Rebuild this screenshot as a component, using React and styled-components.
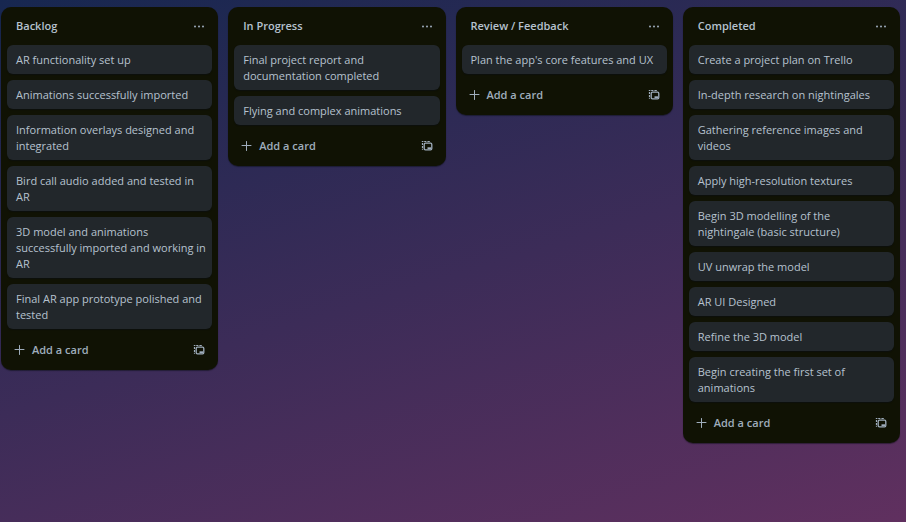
import styled, { createGlobalStyle } from "styled-components";

const lists = [
  {
    name: "Backlog",
    cards: [
      "AR functionality set up",
      "Animations successfully imported",
      "Information overlays designed and integrated",
      "Bird call audio added and tested in AR",
      "3D model and animations successfully imported and working in AR",
      "Final AR app prototype polished and tested",
    ],
  },
  {
    name: "In Progress",
    cards: [
      "Final project report and documentation completed",
      "Flying and complex animations",
    ],
  },
  {
    name: "Review / Feedback",
    cards: ["Plan the app's core features and UX"],
  },
  {
    name: "Completed",
    cards: [
      "Create a project plan on Trello",
      "In-depth research on nightingales",
      "Gathering reference images and videos",
      "Apply high-resolution textures",
      "Begin 3D modelling of the nightingale (basic structure)",
      "UV unwrap the model",
      "AR UI Designed",
      "Refine the 3D model",
      "Begin creating the first set of animations",
    ],
  },
];

const GlobalStyle = createGlobalStyle`
  * {
    box-sizing: border-box;
  }

  body {
    margin: 0;
    font-family: "Open Sans", "Noto Sans", sans-serif;
    font-size: 11px;
    line-height: 16px;
    color: #b6c2cf;
  }
`;

const Board = styled.main`
  display: grid;
  grid-template-columns: repeat(4, 1fr);
  align-items: start;
  gap: 10px;
  min-height: 100vh;
  padding: 7px 6px 7px 1px;
  background: linear-gradient(163deg, #172750 0%, #3c2c58 52%, #60305f 100%);
`;

const List = styled.section`
  padding: 0 6px;
  border-radius: 10px;
  background-color: #101204;
  box-shadow: 0 1px 1px rgba(9, 14, 20, 0.5);
`;

const Header = styled.header`
  display: flex;
  align-items: center;
  justify-content: space-between;
  height: 38px;
  padding: 0 5px 0 9px;
`;

const Name = styled.h2`
  margin: 0;
  font-size: 11px;
  font-weight: 600;
`;

const IconButton = styled.button`
  display: flex;
  padding: 2px;
  border: 0;
  background: none;
  color: #9fadbc;
  cursor: pointer;
`;

const Cards = styled.ul`
  display: flex;
  flex-direction: column;
  gap: 6px;
  margin: 0;
  padding: 0;
  list-style: none;
`;

const Card = styled.li`
  padding: 7px 6px 6px 9px;
  border-radius: 6px;
  background-color: #22272b;
  box-shadow: 0 1px 1px rgba(9, 14, 20, 0.5);
`;

const Footer = styled.footer`
  display: flex;
  align-items: center;
  justify-content: space-between;
  height: 41px;
  padding: 1px 5px 0;
`;

const AddButton = styled.button`
  display: flex;
  align-items: center;
  gap: 6px;
  padding: 0;
  border: 0;
  background: none;
  color: #9fadbc;
  font: inherit;
  font-weight: 600;
  cursor: pointer;
`;

function MoreIcon() {
  return (
    <svg width="12" height="12" viewBox="0 0 12 12" fill="currentColor">
      <circle cx="2" cy="6.5" r="1" />
      <circle cx="6" cy="6.5" r="1" />
      <circle cx="10" cy="6.5" r="1" />
    </svg>
  );
}

function PlusIcon() {
  return (
    <svg width="14" height="14" viewBox="0 0 14 14" fill="none" stroke="currentColor">
      <path d="M7.5 2.5v9M3 6.5h9" strokeLinecap="round" />
    </svg>
  );
}

function TemplateIcon() {
  return (
    <svg width="12" height="12" viewBox="0 0 12 12" fill="none" stroke="currentColor">
      <rect x="3.2" y="3.2" width="7.6" height="6.6" rx="1.2" strokeWidth="1.3" />
      <path d="M6.5 8.2h3.5" strokeWidth="1.8" />
      <path d="M.8 1.5h1.6M3.2 1.5h2.2M6.4 1.5h2.4M1.5 3v2M1.5 6v2M1.5 8.7v1" strokeWidth="1.2" />
    </svg>
  );
}

function BoardList({ name, cards }) {
  return (
    <List>
      <Header>
        <Name>{name}</Name>
        <IconButton type="button" aria-label="List actions">
          <MoreIcon />
        </IconButton>
      </Header>
      <Cards>
        {cards.map((card) => (
          <Card key={card}>{card}</Card>
        ))}
      </Cards>
      <Footer>
        <AddButton type="button">
          <PlusIcon />
          Add a card
        </AddButton>
        <IconButton type="button" aria-label="Create from template">
          <TemplateIcon />
        </IconButton>
      </Footer>
    </List>
  );
}

export default function App() {
  return (
    <>
      <GlobalStyle />
      <Board>
        {lists.map((list) => (
          <BoardList key={list.name} name={list.name} cards={list.cards} />
        ))}
      </Board>
    </>
  );
}
